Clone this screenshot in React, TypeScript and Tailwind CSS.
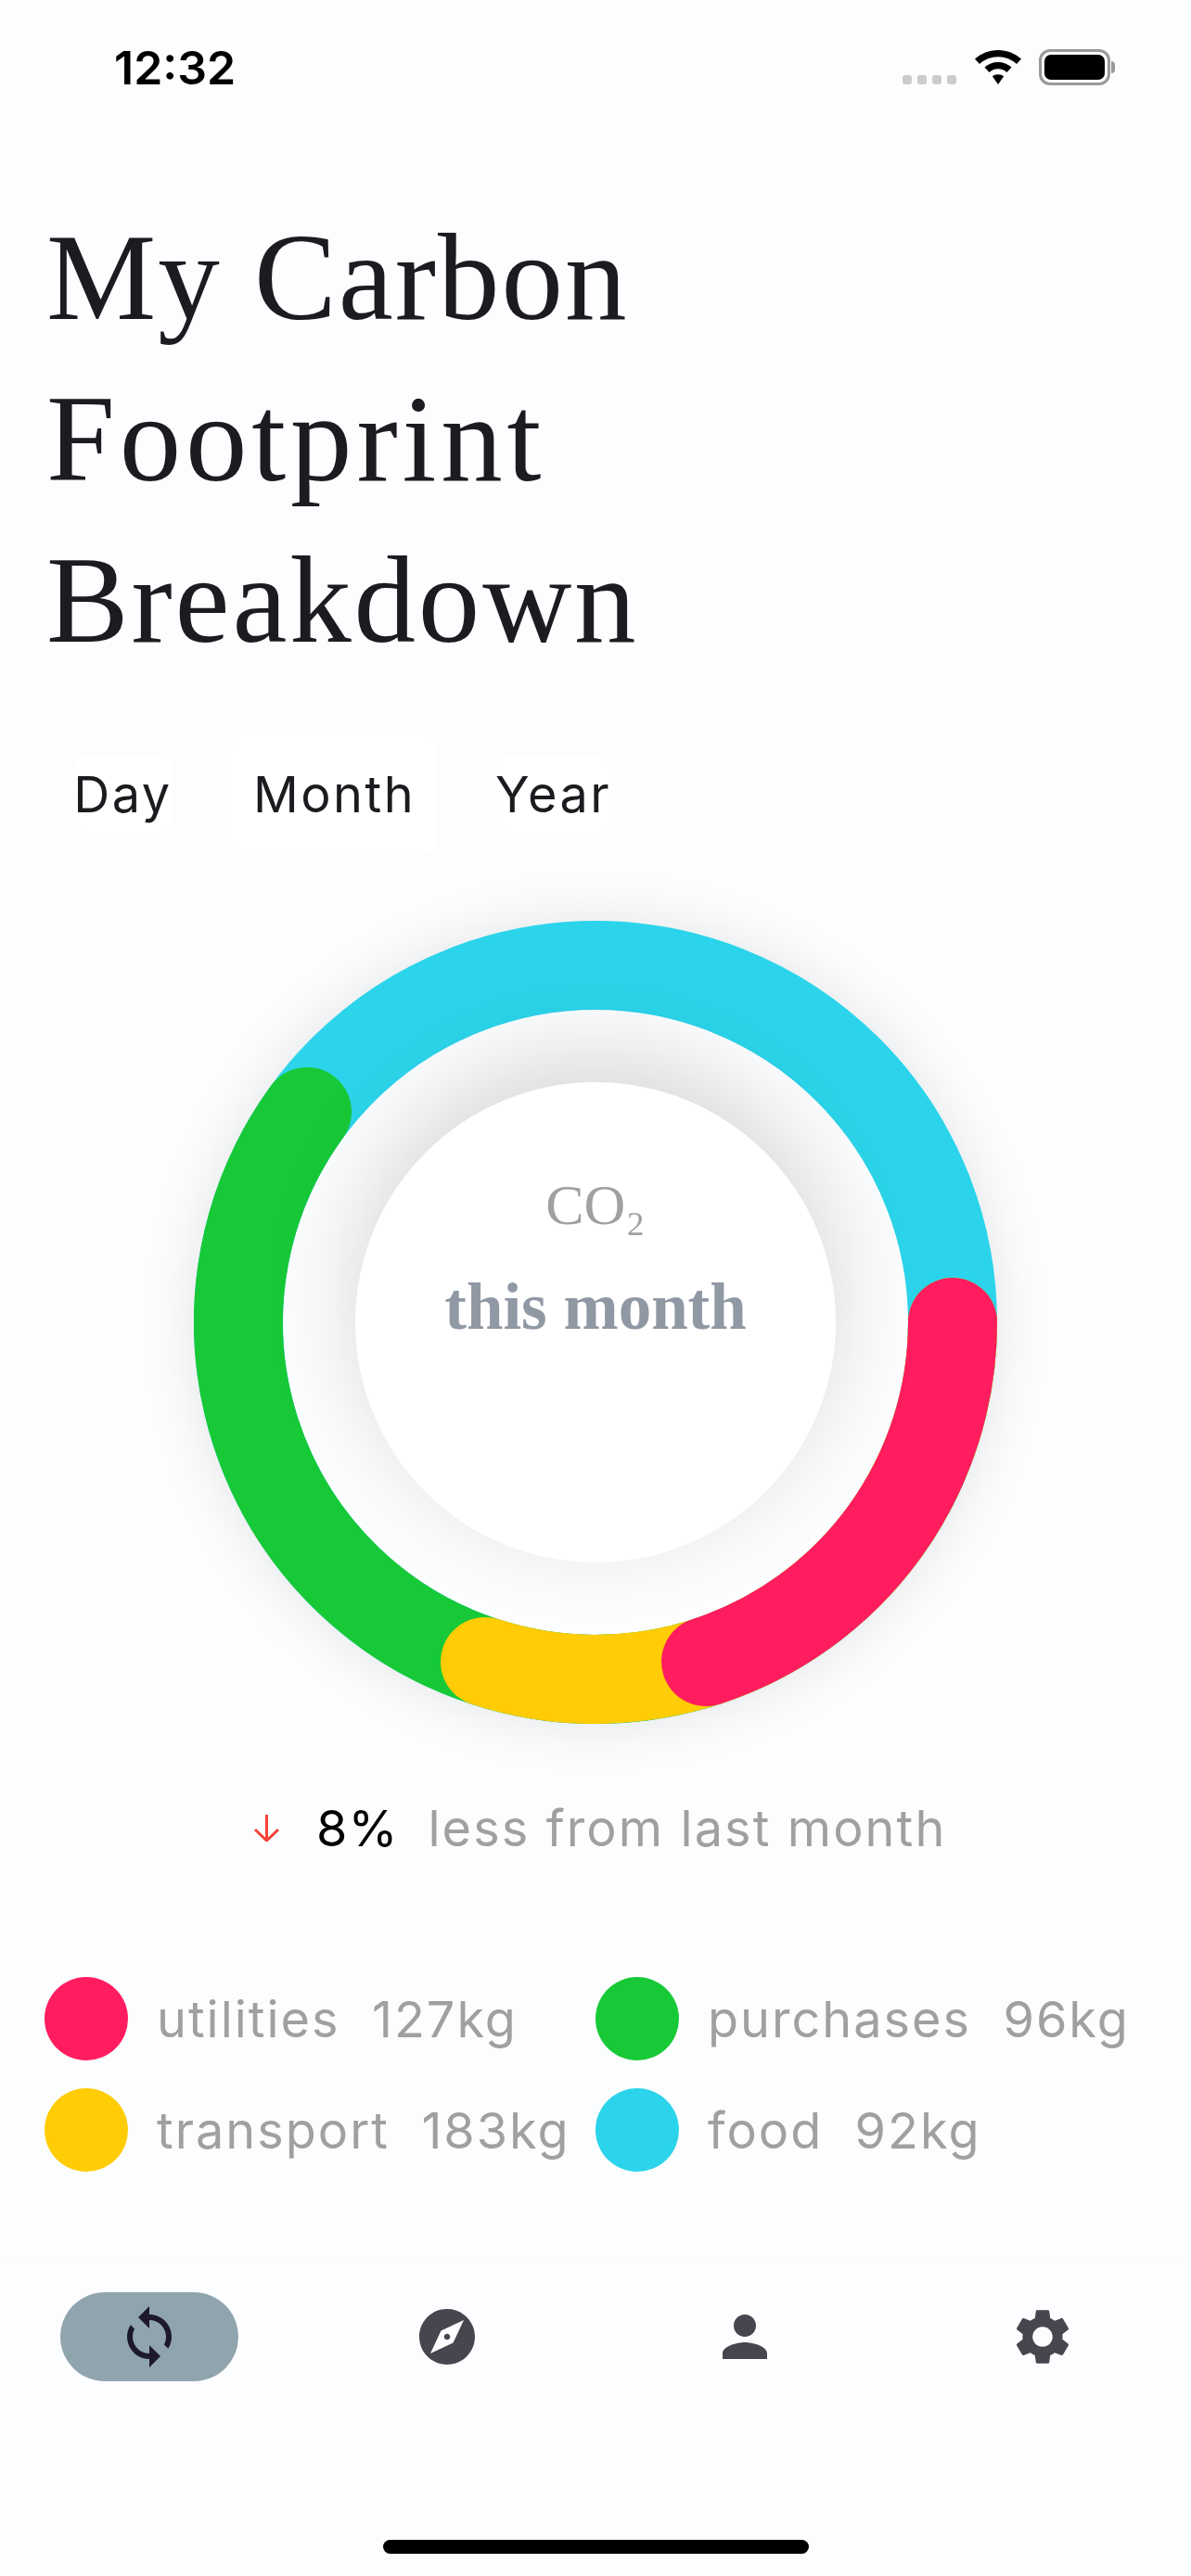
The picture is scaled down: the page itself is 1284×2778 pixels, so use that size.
import { MdExplore, MdPerson, MdSettings, MdSync } from "react-icons/md";

const SANS = "font-['Inter',sans-serif]";
const SERIF = "font-['Liberation_Serif',serif]";

const legend = [
  { label: "utilities  127kg", dot: "bg-[#ff1d5f]" },
  { label: "purchases  96kg", dot: "bg-[#18c937]" },
  { label: "transport  183kg", dot: "bg-[#ffcc05]" },
  { label: "food  92kg", dot: "bg-[#2bd4ea]" },
];

function StatusBar() {
  return (
    <div className="flex h-[120px] items-start justify-between pl-[123px] pr-[82px] pt-[45px]">
      <span className="font-['Inter',sans-serif] text-[50px] font-semibold leading-[56px] text-black">
        12:32
      </span>
      <div className="flex items-end pt-[8px]">
        <div className="mb-[1px] flex gap-[6px]">
          {[0, 1, 2, 3].map((i) => (
            <span key={i} className="h-[10px] w-[10px] rounded-[3px] bg-[#cccccc]" />
          ))}
        </div>
        <svg viewBox="0 0 50 37" className="ml-[20px] mb-[1px] h-[37px] w-[50px]">
          <path d="M25 0C34.5 0 43.3 3.6 50 9.6L45 15C39.7 10.2 32.7 7.3 25 7.3C17.3 7.3 10.3 10.2 5 15L0 9.6C6.7 3.6 15.5 0 25 0Z" />
          <path d="M25 13C30.5 13 35.6 15 39.5 18.6L34.5 24C32 21.7 28.7 20.3 25 20.3C21.3 20.3 18 21.7 15.5 24L10.5 18.6C14.4 15 19.5 13 25 13Z" />
          <path d="M25 26.3C27.6 26.3 30 27.2 31 28.5L25 37L19 28.5C20 27.2 22.4 26.3 25 26.3Z" />
        </svg>
        <div className="ml-[19px] flex items-center">
          <div className="h-[39px] w-[77px] rounded-[12px] border-[3px] border-[#999999] p-[3px]">
            <div className="h-full w-full rounded-[7px] bg-black" />
          </div>
          <div className="ml-[1px] h-[13px] w-[4px] rounded-r-[4px] bg-[#999999]" />
        </div>
      </div>
    </div>
  );
}

function Donut() {
  // ring is drawn bottom to top: cyan, green, yellow, red, each one running under the next
  return (
    <svg viewBox="0 0 866 866" className="absolute inset-0 h-full w-full" fill="none" strokeWidth={96} strokeLinecap="round">
      <circle cx={433} cy={433} r={385} stroke="#2bd4ea" strokeLinecap="butt" />
      <path d="M122 206A385 385 0 1 0 818 433" stroke="#18c937" />
      <path d="M314 799A385 385 0 0 0 818 433" stroke="#ffcc05" />
      <path d="M818 433A385 385 0 0 1 552 799" stroke="#ff1d5f" />
    </svg>
  );
}

export default function App() {
  return (
    <div className="flex h-[2778px] w-[1284px] flex-col overflow-hidden bg-[#fcfdff]">
      <StatusBar />

      <h1 className={`${SERIF} mt-[92px] pl-[50px] text-[133px] font-normal leading-[174px] tracking-[2px] text-[#1c1b1f]`}>
        My Carbon
        <br />
        <span className="tracking-[4.8px]">Footprint</span>
        <br />
        <span className="tracking-[2.8px]">Breakdown</span>
      </h1>

      <div className={`${SANS} mt-[58px] flex h-[129px] items-center gap-[65px] pl-[80px] text-[54px] tracking-[2.5px] text-[#1c1b1f]`}>
        <span className="flex h-[81px] w-[105px] items-center justify-center rounded-[12px] bg-white">Day</span>
        <span className="flex h-[129px] w-[221px] items-center justify-center rounded-[14px] bg-white">Month</span>
        <span className="flex h-[81px] w-[121px] items-center justify-center rounded-[12px] bg-white">Year</span>
      </div>

      <div className="relative mx-auto mt-[72px] flex h-[866px] w-[866px] shrink-0 items-center justify-center rounded-full shadow-[0_0_60px_rgba(0,0,0,0.1)]">
        <Donut />
        <div className="relative flex h-[518px] w-[518px] flex-col items-center rounded-full bg-white shadow-[0_-30px_100px_rgba(0,0,0,0.15)]">
          <span className={`${SERIF} mt-[96px] text-[62px] leading-[72px] text-[#a0a0a0]`}>CO₂</span>
          <span className={`${SERIF} mt-[34px] text-[71px] font-bold leading-[80px] text-[#9098a4]`}>this month</span>
        </div>
      </div>

      <div className={`${SANS} mt-[72px] flex h-[80px] items-center pl-[273px] text-[54px] tracking-[2.1px]`}>
        <svg viewBox="0 0 29 29" className="h-[29px] w-[29px]" fill="none" stroke="#f44336" strokeWidth={3}>
          <path d="M14.5 0V28M2 16L14.5 28L27 16" />
        </svg>
        <span className="ml-[39px] tracking-[1px] text-black">8%</span>
        <span className="ml-[32px] text-[#a0a0a0]">less from last month</span>
      </div>

      <div className={`${SANS} mt-[121px] grid grid-cols-[594px_1fr] gap-y-[30px] pl-[48px] text-[54px] tracking-[2px] text-[#a0a0a0]`}>
        {legend.map((item) => (
          <div key={item.label} className="flex h-[90px] items-center gap-[31px]">
            <span className={`h-[90px] w-[90px] shrink-0 rounded-full ${item.dot}`} />
            <span className="whitespace-pre">{item.label}</span>
          </div>
        ))}
      </div>

      <nav className="mt-[94px] flex flex-1 flex-col border-t border-[#f7f8fa] pt-[35px]">
        <div className="grid grid-cols-4">
          <div className="flex justify-center">
            <div className="flex h-[96px] w-[192px] items-center justify-center rounded-full bg-[#90a4ae]">
              <MdSync className="h-[72px] w-[72px] text-[#1d192b]" />
            </div>
          </div>
          <div className="flex h-[96px] items-center justify-center">
            <MdExplore className="h-[72px] w-[72px] text-[#49454f]" />
          </div>
          <div className="flex h-[96px] items-center justify-center">
            <MdPerson className="h-[72px] w-[72px] text-[#49454f]" />
          </div>
          <div className="flex h-[96px] items-center justify-center">
            <MdSettings className="h-[72px] w-[72px] text-[#49454f]" />
          </div>
        </div>
        <div className="mx-auto mt-[171px] h-[15px] w-[459px] rounded-full bg-black" />
      </nav>
    </div>
  );
}
